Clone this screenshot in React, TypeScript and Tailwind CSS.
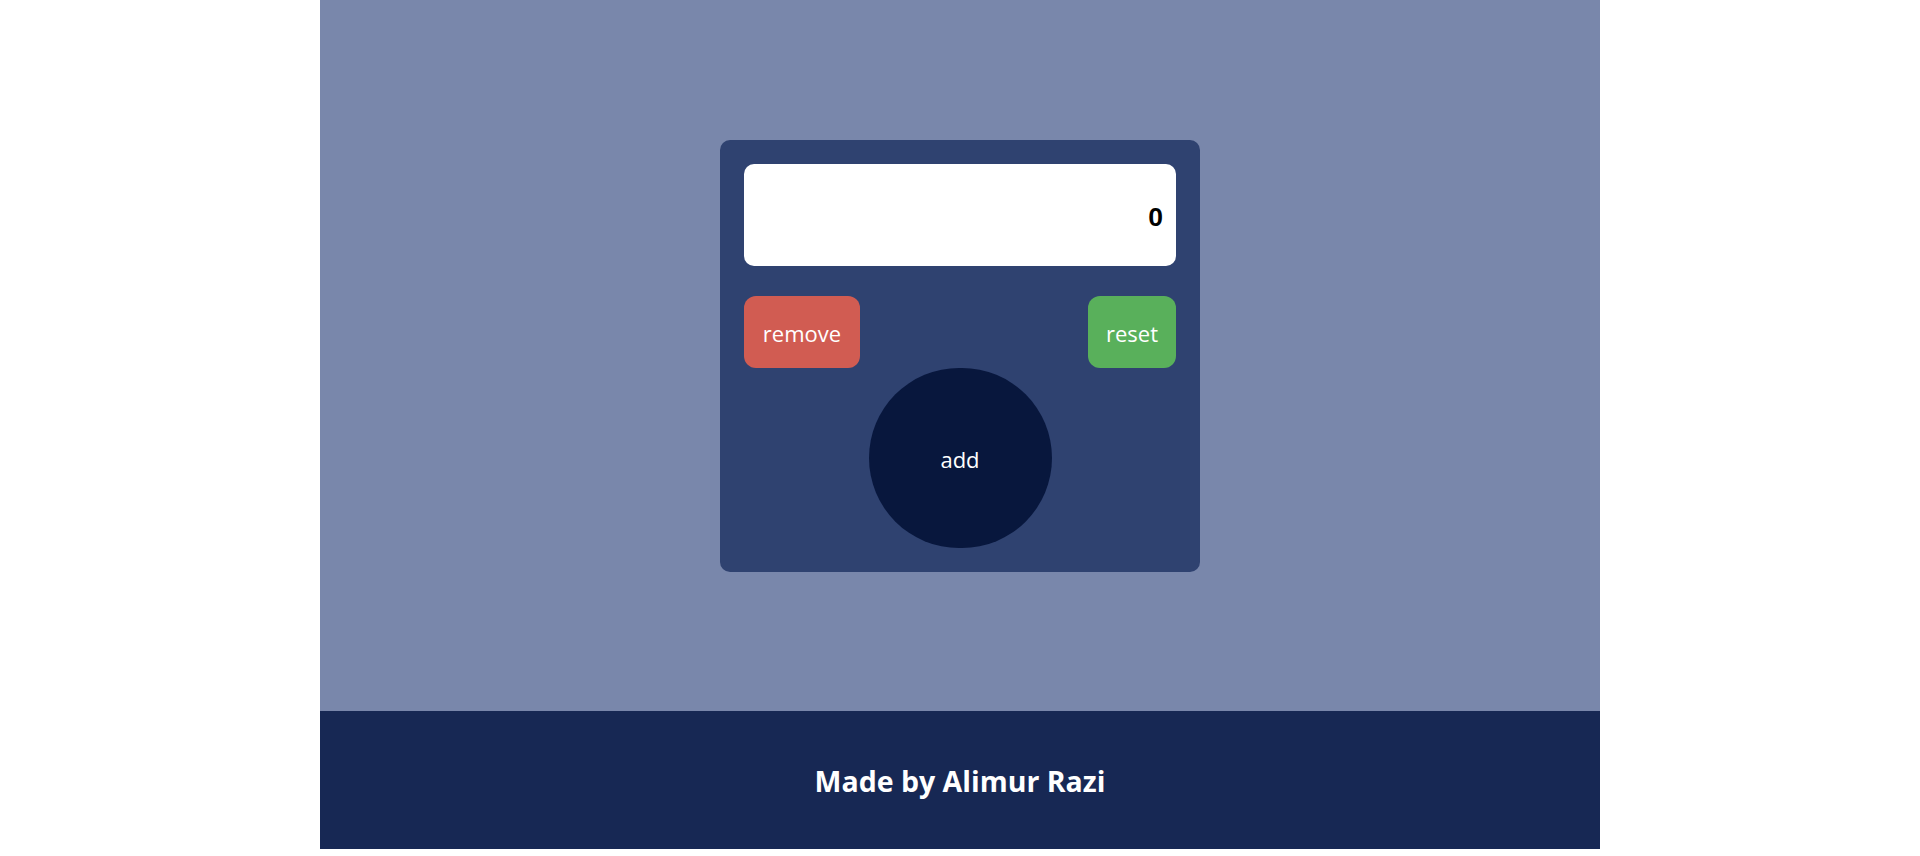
import React, { useState } from "react";

export default function App() {
  const [count, setCount] = useState(0);
  return (
    <div className="w-full min-h-[856px] bg-white">
      <div className="w-[1280px] mx-auto flex flex-col">
        <main className="h-[711px] bg-[#7987ab] flex justify-center pt-[140px]">
          <div className="w-[480px] h-[432px] bg-[#2f4270] rounded-[10px] p-6 flex flex-col">
            <div className="h-[102px] bg-white rounded-[10px] flex items-center justify-end pr-[13px] pt-[5px]">
              <span
                className="text-[26.5px] font-bold text-black leading-none"
                style={{ fontFamily: '"Liberation Sans", Arial, sans-serif' }}
              >
                {count}
              </span>
            </div>
            <div
              className="mt-[30px] flex justify-between"
              style={{ fontFamily: '"Open Sans", "Noto Sans", sans-serif' }}
            >
              <button
                onClick={() => setCount((c) => c - 1)}
                className="h-[72px] w-[116px] rounded-[12px] bg-[#d15c52] text-white text-[22px] flex items-center justify-center pt-[2px]"
              >
                remove
              </button>
              <button
                onClick={() => setCount(0)}
                className="h-[72px] w-[88px] rounded-[12px] bg-[#59b05b] text-white text-[22px] flex items-center justify-center pt-[2px]"
              >
                reset
              </button>
            </div>
            <button
              onClick={() => setCount((c) => c + 1)}
              className="mx-auto w-[183px] h-[180px] rounded-full bg-[#08173d] text-white text-[22px] flex items-center justify-center pt-[2px]"
              style={{ fontFamily: '"Open Sans", "Noto Sans", sans-serif' }}
            >
              add
            </button>
          </div>
        </main>
        <footer className="h-[138px] bg-[#172854] flex items-center justify-center pt-[2px]">
          <span
            className="text-white font-bold text-[28.5px]"
            style={{ fontFamily: '"Open Sans", "Noto Sans", sans-serif' }}
          >
            Made by Alimur Razi
          </span>
        </footer>
      </div>
    </div>
  );
}
